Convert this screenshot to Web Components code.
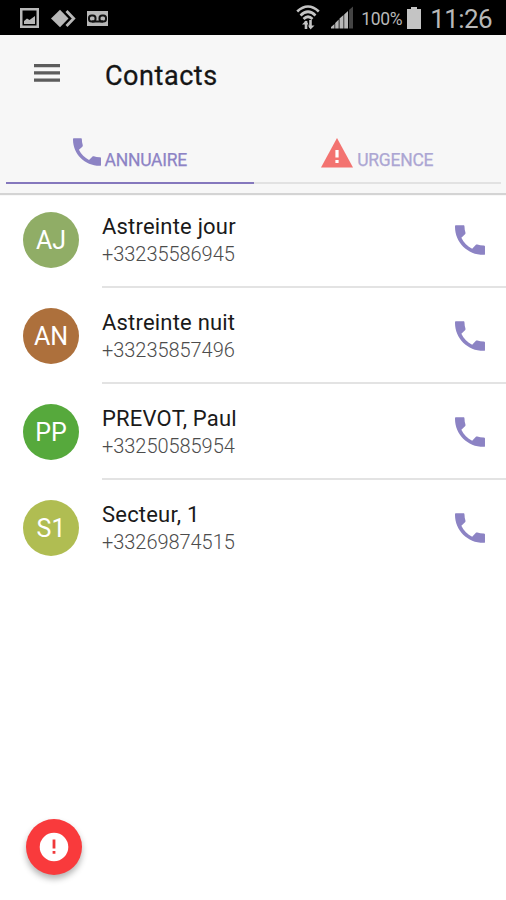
<!DOCTYPE html>
<html lang="fr">
<head>
<meta charset="utf-8">
<title>Contacts</title>
<style>
  body {
    margin: 0;
    font-family: Roboto, sans-serif;
    background: #fff;
  }
</style>
</head>
<body>
<contacts-app></contacts-app>
<script>
customElements.define('phone-icon', class PhoneIcon extends HTMLElement {
  constructor() {
    super();
    this.attachShadow({mode: 'open'});
    this.shadowRoot.innerHTML = this.template;
  }
  get template() {
    return `<style>
    :host {
      display: block;
      width: 30px;
      height: 30px;
      color: #8c83c4;
    }
    svg {
      display: block;
      width: 100%;
      height: 100%;
      fill: currentColor;
    }
    </style>
    <svg viewBox="3 3 18 18"><path d="M6.800 10.600c1.440 2.830 3.760 5.200 6.500 6.600l2.100-2.200c.27-.27.67-.36 1.020-.24 1.120.37 2.330.57 3.570.57.55 0 1 .05 1 .5V20.400c0 .45-.25.500-.7.500C10.600 21 3 13.400 3 4c0-.7.150-.9.700-.9h4.400c.5 0 .6.350.6.900 0 1.250.2 2.450.57 3.570.11.350.03.740-.25 1.020l-2.200 2z"/></svg>`
  }
});

customElements.define('status-bar', class StatusBar extends HTMLElement {
  constructor() {
    super();
    this.attachShadow({mode: 'open'});
    this.shadowRoot.innerHTML = this.template;
  }
  get template() {
    return `<style>
    :host {
      display: flex;
      align-items: center;
      justify-content: space-between;
      box-sizing: border-box;
      height: 35px;
      padding: 0 14px 0 19px;
      background: #000;
      color: #b8b8b8;
    }
    div {
      display: flex;
      align-items: center;
    }
    svg {
      display: block;
    }
    .level {
      margin-left: 7px;
      font-size: 17.5px;
      line-height: 20px;
      letter-spacing: -.3px;
      padding-top: 3px;
    }
    .time {
      margin-left: 9px;
      font-size: 26px;
      line-height: 30px;
      letter-spacing: -.6px;
      padding-top: 3px;
    }
    </style>
    <div>
      <svg width="90" height="22" viewBox="0 0 90 22">
        <path fill="#b8b8b8" fill-rule="evenodd" d="M1 1h19v20H1zM3.500 3.500v15h14v-15z"/>
        <path fill="#b8b8b8" d="M5 17v-3l3-2.500 2.500 1.500L16 9v8z"/>
        <path fill="#b8b8b8" d="M32 11.500 41 2.800l8.500 8.700L41 20.300z"/>
        <path fill="none" stroke="#b8b8b8" stroke-width="2.800" d="m47.500 4 7.200 7.500-7.200 7.500"/>
        <path fill="#b8b8b8" d="M68 4h21v15H68z"/>
        <g fill="none" stroke="#111" stroke-width="2">
          <rect x="70" y="8.500" width="6.500" height="6" rx="2.500"/>
          <rect x="80.500" y="8.500" width="6.500" height="6" rx="2.500"/>
          <path d="M73 14.500h11"/>
        </g>
      </svg>
    </div>
    <div>
      <svg width="24" height="27" viewBox="0 0 24 27">
        <g fill="none" stroke="#c4c4c4" stroke-width="2.600">
          <path d="M1.200 7.500Q12-2.500 22.800 7.500"/>
          <path d="M4.500 11.500Q12 4 19.500 11.500"/>
          <path d="M7.500 15Q12 10.500 16.500 15"/>
          <path d="M10 17v8M14.500 16v8"/>
        </g>
        <path fill="#c4c4c4" d="m6 20.500 4-4 2.500 4zM12 21.500l2.500 4 4-4z"/>
      </svg>
      <svg width="24" height="24" viewBox="0 0 24 24" style="margin-left:10px">
        <path fill="#b8b8b8" d="M1 22.500v-1.500l3.500-3v4.500zM5.200 22.500v-5.500l3.500-3.500v9zM9.500 22.500v-10l4-3.500v13.500zM14.200 22.500v-14L18 5v17.500z"/>
        <path fill="#444" d="M19 22.500V4l4-3.500v22z"/>
      </svg>
      <span class="level">100%</span>
      <svg width="14" height="24" viewBox="0 0 14 24" style="margin-left:5px">
        <path fill="#c4c4c4" d="M0 3h4V1h6v2h4v20H0z"/>
      </svg>
      <span class="time">11:26</span>
    </div>`
  }
});

customElements.define('app-header', class AppHeader extends HTMLElement {
  constructor() {
    super();
    this.attachShadow({mode: 'open'});
    this.shadowRoot.innerHTML = this.template;
  }
  get template() {
    return `<style>
    :host {
      display: flex;
      flex-direction: column;
      box-sizing: border-box;
      height: 158px;
      background: #f7f7f7;
      box-shadow: 0 2px 1px #d4d4d4;
    }
    header {
      display: flex;
      align-items: center;
      height: 80px;
      padding-left: 34px;
      gap: 45px;
    }
    h1 {
      margin: 2px 0 0;
      font-size: 27px;
      font-weight: 400;
      line-height: 32px;
      letter-spacing: .55px;
      color: #151515;
      -webkit-text-stroke: .3px #151515;
    }
    svg {
      display: block;
      margin-top: -4px;
    }
    nav {
      display: flex;
      flex: 1;
      padding: 0 5px 0 6px;
    }
    </style>
    <header>
      <svg width="26" height="18" viewBox="0 0 26 18"><path fill="#5c5c5c" d="M0 0h26v3.200H0zM0 7.300h26v3.200H0zM0 14.500h26v3.200H0z"/></svg>
      <h1><slot></slot></h1>
    </header>
    <nav><slot name="tab"></slot></nav>`
  }
});

customElements.define('header-tab', class HeaderTab extends HTMLElement {
  constructor() {
    super();
    this.attachShadow({mode: 'open'});
    this.shadowRoot.innerHTML = this.template;
  }
  get template() {
    return `<style>
    :host {
      display: flex;
      flex: 1;
      justify-content: center;
      align-items: flex-start;
      gap: 4px;
      box-sizing: border-box;
      height: 69px;
      padding-top: 23px;
      border-bottom: 2px solid #e2e2e2;
      color: #aca6d3;
    }
    :host([active]) {
      border-color: #8578bd;
      color: #8d83c5;
    }
    span {
      margin-top: 11px;
      font-size: 17.5px;
      line-height: 22px;
      letter-spacing: -.25px;
      -webkit-text-stroke: .25px currentColor;
    }
    </style>
    <slot name="icon"></slot>
    <span><slot></slot></span>`
  }
});

customElements.define('contact-row', class ContactRow extends HTMLElement {
  constructor() {
    super();
    this.attachShadow({mode: 'open'});
    this.shadowRoot.innerHTML = this.template;
  }
  get template() {
    return `<style>
    :host {
      display: flex;
      align-items: center;
      height: 96px;
      padding-left: 23px;
    }
    .avatar {
      width: 56px;
      height: 56px;
      border-radius: 50%;
      background: var(--avatar);
      color: #fff;
      font-size: 25px;
      line-height: 57px;
      text-align: center;
    }
    .body {
      display: flex;
      flex: 1;
      align-items: center;
      justify-content: space-between;
      box-sizing: border-box;
      height: 96px;
      margin-left: 23px;
      padding: 2px 21px 0 0;
      border-bottom: 2px solid #e3e3e3;
    }
    :host(:last-of-type) .body {
      border-color: transparent;
    }
    .name {
      font-size: 22px;
      line-height: 28px;
      letter-spacing: .2px;
      color: #1a1a1a;
    }
    .number {
      font-size: 20px;
      line-height: 26px;
      font-weight: 300;
      letter-spacing: -.05px;
      color: #4c4c4c;
    }
    </style>
    <div class="avatar"><slot name="initials"></slot></div>
    <div class="body">
      <div>
        <div class="name"><slot></slot></div>
        <div class="number"><slot name="number"></slot></div>
      </div>
      <phone-icon></phone-icon>
    </div>`
  }
});

customElements.define('alert-button', class AlertButton extends HTMLElement {
  constructor() {
    super();
    this.attachShadow({mode: 'open'});
    this.shadowRoot.innerHTML = this.template;
  }
  get template() {
    return `<style>
    :host {
      display: flex;
      align-items: center;
      justify-content: center;
      width: 56px;
      height: 56px;
      border-radius: 50%;
      background: #f93a3c;
      box-shadow: 0 4px 6px rgba(0, 0, 0, .3);
    }
    </style>
    <svg width="30" height="30" viewBox="0 0 30 30">
      <circle cx="15" cy="15" r="14.300" fill="#fff"/>
      <path fill="#f0383a" d="M13.600 7.500h2.800v9h-2.800zM13.600 19h2.800v2.800h-2.800z"/>
    </svg>`
  }
});

customElements.define('contacts-app', class ContactsApp extends HTMLElement {
  constructor() {
    super();
    this.attachShadow({mode: 'open'});
    this.shadowRoot.innerHTML = this.template;
  }
  get template() {
    return `<style>
    :host {
      display: flex;
      flex-direction: column;
      position: relative;
      height: 900px;
      overflow: hidden;
    }
    app-header {
      position: relative;
      z-index: 1;
    }
    main {
      margin-top: -1px;
    }
    .warning {
      display: block;
    }
    header-tab phone-icon {
      width: 28px;
      height: 28px;
    }
    alert-button {
      position: absolute;
      left: 26px;
      bottom: 25px;
    }
    </style>
    <status-bar></status-bar>
    <app-header>
      Contacts
      <header-tab slot="tab" active>
        <phone-icon slot="icon"></phone-icon>ANNUAIRE
      </header-tab>
      <header-tab slot="tab">
        <svg class="warning" slot="icon" width="32" height="30" viewBox="0 0 32 30">
          <path fill="#f37370" d="M16 0 32 29.500H0z"/>
          <path fill="#fff" d="M14.400 12h3.200v7.500h-3.200zM14.400 22h3.200v3h-3.200z"/>
        </svg>URGENCE
      </header-tab>
    </app-header>
    <main>
      <contact-row style="--avatar:#90ad66"><span slot="initials">AJ</span>Astreinte jour<span slot="number">+33235586945</span></contact-row>
      <contact-row style="--avatar:#ad703c"><span slot="initials">AN</span>Astreinte nuit<span slot="number">+33235857496</span></contact-row>
      <contact-row style="--avatar:#56a93c"><span slot="initials">PP</span>PREVOT, Paul<span slot="number">+33250585954</span></contact-row>
      <contact-row style="--avatar:#b0bd52"><span slot="initials">S1</span>Secteur, 1<span slot="number">+33269874515</span></contact-row>
    </main>
    <alert-button></alert-button>`
  }
});
</script>
</body>
</html>
